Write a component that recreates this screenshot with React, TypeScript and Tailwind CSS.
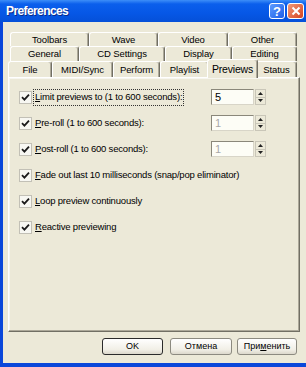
import React from "react";

function Tab({ label, cls, selected }: { label: string; cls: string; selected?: boolean }) {
  if (selected) {
    return (
      <div
        className={`${cls} relative z-10 mx-[-2px] mb-[-1px] h-[19px] flex items-start pt-[3px] justify-center border-l border-t border-white border-r border-r-[#716F64] rounded-t-[3px] shadow-[inset_-1px_0_0_#ACA899] bg-[#ECE9D8] text-[10.5px] leading-[12px] tracking-[-0.2px] text-black`}
      >
        {label}
      </div>
    );
  }
  return (
    <div
      className={`${cls} h-full flex items-center justify-center border-l border-t border-white border-r border-r-[#716F64] rounded-t-[3px] shadow-[inset_-1px_0_0_#ACA899] bg-[#ECE9D8] text-[9.5px] leading-none tracking-[-0.1px] text-black`}
    >
      {label}
    </div>
  );
}

function Check({ focus, children }: { focus?: boolean; children: React.ReactNode }) {
  return (
    <div className="flex items-center">
      <div className="w-[13px] h-[13px] border border-[#c2c0b6] bg-[#f7f7f2] flex items-center justify-center">
        <svg width="9" height="9" viewBox="0 0 9 9">
          <path d="M1 4.2 L3.4 6.6 L8 1.6" stroke="#1a1a1a" strokeWidth="1.8" fill="none" />
        </svg>
      </div>
      <div
        className={`ml-[2px] px-[1px] h-[15px] flex items-center text-[9.5px] leading-none text-black tracking-[-0.2px] ${
          focus ? "outline outline-1 outline-dotted outline-[#333]" : ""
        }`}
      >
        {children}
      </div>
    </div>
  );
}

function Spin({ value, dim }: { value: string; dim?: boolean }) {
  return (
    <div className="ml-auto mr-[33px] flex items-stretch h-[16px]">
      <div
        className={`w-[43px] border border-t-[#8a877a] border-l-[#8a877a] border-r-[#d8d5c8] border-b-[#d8d5c8] bg-[#fdfdf6] flex items-center pl-[3px] text-[11px] leading-none ${
          dim ? "text-[#a8a8a8]" : "text-black"
        }`}
      >
        {value}
      </div>
      <div className="ml-[1px] w-[11px] flex flex-col border border-[#c9c6b8] bg-[#ECE9D8]">
        <div className="flex-1 flex items-center justify-center border-b border-[#c9c6b8]">
          <svg width="5" height="3" viewBox="0 0 5 3">
            <path d="M0 3 L2.5 0 L5 3 Z" fill="#222" />
          </svg>
        </div>
        <div className="flex-1 flex items-center justify-center">
          <svg width="5" height="3" viewBox="0 0 5 3">
            <path d="M0 0 L2.5 3 L5 0 Z" fill="#222" />
          </svg>
        </div>
      </div>
    </div>
  );
}

function U({ c }: { c: string }) {
  return <span className="underline underline-offset-1">{c}</span>;
}

export default function App() {
  return (
    <div className="w-[306px] h-[367px] overflow-hidden flex flex-col bg-[#0a47da] font-['Liberation_Sans',Arial,sans-serif] select-none">
      {/* Title bar */}
      <div className="h-[22px] flex items-center bg-[linear-gradient(#3d8ef8_0%,#0b5fec_18%,#0657e6_60%,#0550d8_100%)] pl-[6px]">
        <span className="text-white font-bold text-[12px] tracking-[-0.6px] leading-none [text-shadow:1px_1px_0_#0a2a8a]">
          Preferences
        </span>
        <div className="ml-auto mr-[2px] flex gap-[2px]">
          <div className="w-[16px] h-[16px] rounded-[3px] border border-white bg-[linear-gradient(135deg,#5d9bff,#1c5ee8)] flex items-center justify-center text-white font-bold text-[13px] leading-none">
            ?
          </div>
          <div className="w-[17px] h-[16px] rounded-[3px] border border-white bg-[linear-gradient(135deg,#f29a7a,#d5431f)] flex items-center justify-center">
            <svg width="10" height="10" viewBox="0 0 10 10">
              <path d="M1.5 1.5 L8.5 8.5 M8.5 1.5 L1.5 8.5" stroke="white" strokeWidth="2" />
            </svg>
          </div>
        </div>
      </div>

      {/* Frame */}
      <div className="flex-1 flex pl-[3px] pb-[4px]">
        <div className="flex-1 bg-[#ECE9D8] flex flex-col pt-[10px]">
          {/* Tab row 1 */}
          <div className="ml-[7px] h-[14px] flex">
            <Tab label="Toolbars" cls="w-[79px]" />
            <Tab label="Wave" cls="w-[69px]" />
            <Tab label="Video" cls="w-[70px]" />
            <Tab label="Other" cls="w-[69px]" />
          </div>
          {/* Tab row 2 */}
          <div className="ml-[7px] h-[15px] flex">
            <Tab label="General" cls="w-[69px]" />
            <Tab label="CD Settings" cls="w-[86px]" />
            <Tab label="Display" cls="w-[67px]" />
            <Tab label="Editing" cls="w-[65px]" />
          </div>
          {/* Tab row 3 */}
          <div className="ml-[5px] h-[16px] flex items-end">
            <Tab label="File" cls="w-[44px]" />
            <Tab label="MIDI/Sync" cls="w-[61px]" />
            <Tab label="Perform" cls="w-[47px]" />
            <Tab label="Playlist" cls="w-[49px]" />
            <Tab label="Previews" cls="w-[51px]" selected />
            <Tab label="Status" cls="w-[41px]" />
          </div>

          {/* Panel */}
          <div className="ml-[5px] w-[292px] h-[255px] border border-t-white border-l-white border-r-[#716F64] border-b-[#716F64] shadow-[inset_-1px_-1px_0_#ACA899,inset_1px_1px_0_#f7f6f0] pt-[6px] pl-[10px] flex flex-col">
            <div className="h-[26px] flex items-center">
              <Check focus>
                <U c="L" />imit previews to (1 to 600 seconds):
              </Check>
              <Spin value="5" />
            </div>
            <div className="h-[26px] flex items-center">
              <Check>
                <U c="P" />re-roll (1 to 600 seconds):
              </Check>
              <Spin value="1" dim />
            </div>
            <div className="h-[26px] flex items-center">
              <Check>
                <U c="P" />ost-roll (1 to 600 seconds):
              </Check>
              <Spin value="1" dim />
            </div>
            <div className="h-[26px] flex items-center">
              <Check>
                <U c="F" />ade out last 10 milliseconds (snap/pop eliminator)
              </Check>
            </div>
            <div className="h-[26px] flex items-center">
              <Check>
                <U c="L" />oop preview continuously
              </Check>
            </div>
            <div className="h-[26px] flex items-center">
              <Check>
                <U c="R" />eactive previewing
              </Check>
            </div>
          </div>

          {/* Buttons */}
          <div className="mt-[6px] h-[17px] flex justify-end mr-[9px]">
            <button className="w-[61px] h-full rounded-[3px] border border-[#2b2b2b] bg-[linear-gradient(#ffffff,#f1efe6_70%,#dcd8cc)] text-[9px] leading-none text-black">
              OK
            </button>
            <button className="ml-[7px] w-[62px] h-full rounded-[3px] border border-[#8c8a80] bg-[linear-gradient(#ffffff,#f1efe6_70%,#dcd8cc)] text-[9px] leading-none text-black">
              Отмена
            </button>
            <button className="ml-[5px] w-[60px] h-full rounded-[3px] border border-[#8c8a80] bg-[linear-gradient(#ffffff,#f1efe6_70%,#dcd8cc)] text-[9px] leading-none text-black">
              При<U c="м" />енить
            </button>
          </div>
        </div>
      </div>
    </div>
  );
}
